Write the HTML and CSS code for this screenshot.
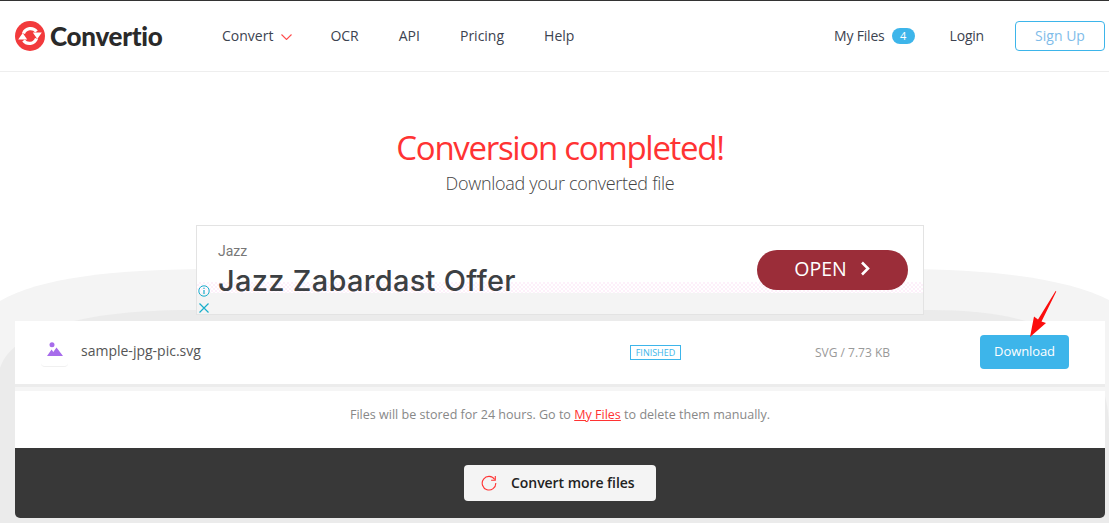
FILE: index.html
```html
<!DOCTYPE html>
<html lang="en">
<head>
<meta charset="utf-8">
<title>Convertio</title>
<link rel="stylesheet" href="styles.css">
</head>
<body>
<svg class="backdrop" width="1109" height="523" viewBox="0 0 1109 523" aria-hidden="true">
  <path class="backdrop-outer" d="M0 301C40 278 110 269 220 269H900C1000 269 1070 280 1109 300V523H0Z"/>
  <path class="backdrop-inner" d="M0 368C10 335 70 310 190 310H930C1020 310 1070 330 1092 365C1102 385 1109 400 1109 430V523H0Z"/>
</svg>
<header class="site-header">
  <a class="logo">
    <svg class="logo-mark" width="30" height="30" viewBox="0 0 30 30" aria-hidden="true">
      <circle cx="15" cy="15" r="15" fill="#f23a3c"/>
      <path d="M8.500 12.500A7.500 7.500 0 0 1 21.500 10.500" fill="none" stroke="#fff" stroke-width="3.200"/>
      <path d="M21.500 17.500A7.500 7.500 0 0 1 8.500 19.500" fill="none" stroke="#fff" stroke-width="3.200"/>
      <path fill="#fff" d="M17.800 11.500h9l-4.500 6.500ZM3.200 18.500h9L7.700 12Z"/>
    </svg>
    <span class="logo-text">Convertio</span>
  </a>
  <nav class="main-nav">
    <a class="nav-link nav-convert">Convert
      <svg class="caret" width="11" height="6" viewBox="0 0 11 6" aria-hidden="true"><path d="M.5.5l5 5 5-5" fill="none" stroke="#ff4b4b" stroke-width="1.100"/></svg>
    </a>
    <a class="nav-link nav-ocr">OCR</a>
    <a class="nav-link nav-api">API</a>
    <a class="nav-link nav-pricing">Pricing</a>
    <a class="nav-link">Help</a>
  </nav>
  <div class="account">
    <a class="nav-link my-files">My Files</a>
    <span class="count">4</span>
    <a class="nav-link login">Login</a>
    <a class="signup">Sign Up</a>
  </div>
</header>
<main class="content">
  <h1 class="title">Conversion completed!</h1>
  <p class="subtitle">Download your converted file</p>
  <section class="ad">
    <div class="ad-dither"></div>
    <div class="ad-main">
      <div class="ad-copy">
        <div class="ad-brand">Jazz</div>
        <div class="ad-headline">Jazz Zabardast Offer</div>
      </div>
      <a class="ad-open">OPEN
        <svg width="11" height="15" viewBox="0 0 11 15" aria-hidden="true"><path d="M2 1.500 8 7.500 2 13.500" fill="none" stroke="#fff" stroke-width="2.600"/></svg>
      </a>
    </div>
    <div class="ad-foot"></div>
    <div class="ad-controls">
      <svg width="12" height="12" viewBox="0 0 12 12" aria-hidden="true"><circle cx="6" cy="6" r="5.200" fill="none" stroke="#19aecb"/><path d="M6 5v4M6 2.800v1.200" stroke="#19aecb" stroke-width="1.200"/></svg>
      <svg width="12" height="12" viewBox="0 0 12 12" aria-hidden="true"><path d="M1.500 1.500l9 9M10.500 1.500l-9 9" stroke="#19aecb" stroke-width="1.200"/></svg>
    </div>
  </section>
  <section class="file-row">
    <div class="file-icon">
      <svg width="16" height="14" viewBox="0 0 16 14" aria-hidden="true"><circle cx="5" cy="2.700" r="2.500" fill="#a76ceb"/><path fill="#a76ceb" d="M0 14 4.600 7.500l1.700 2.400L9.500 5.500 16 14Z"/></svg>
    </div>
    <div class="file-name">sample-jpg-pic.svg</div>
    <div class="file-status"><span class="finished">Finished</span></div>
    <div class="file-size">SVG / 7.73 KB</div>
    <a class="download">Download</a>
  </section>
  <p class="notice">Files will be stored for 24 hours. Go to <a class="notice-link">My Files</a> to delete them manually.</p>
  <footer class="more">
    <a class="more-button">
      <svg width="16" height="16" viewBox="0 0 16 16" aria-hidden="true"><path d="M13.700 4.500A6.800 6.800 0 1 0 14.800 8" fill="none" stroke="#f33" stroke-width="1.100"/><path d="M14.300 1v4.200h-4.200" fill="none" stroke="#f33" stroke-width="1.100"/></svg>
      <span class="more-label">Convert more files</span>
    </a>
  </footer>
</main>
<svg class="pointer" width="30" height="48" viewBox="0 0 30 48" aria-hidden="true"><path fill="#fb0d0d" d="M26.300.5 11.500 30.500 16 32 0 46 4 25.500 8 28.500 25.600 0Z"/></svg>
</body>
</html>
```

FILE: styles.css
```css
* { box-sizing: border-box; }
html, body { margin: 0; padding: 0; }
body {
  position: relative;
  width: 1109px;
  height: 523px;
  overflow: hidden;
  background: #fff;
  font-family: "Open Sans", "Liberation Sans", sans-serif;
  color: #444;
}
a { color: inherit; text-decoration: none; }

.backdrop { position: absolute; left: 0; top: 0; }
.backdrop-outer { fill: #f4f4f4; }
.backdrop-inner { fill: #ebebeb; }

.site-header {
  position: relative;
  display: flex;
  align-items: center;
  height: 72px;
  padding: 0 4px 0 15px;
  background: #fff;
  border-top: 1px solid #333;
  border-bottom: 1px solid #eee;
}
.logo { display: flex; align-items: center; width: 207px; }
.logo-mark { flex: none; }
.logo-text {
  margin-left: 5px;
  font: 900 26px/30px Lato, "Open Sans", sans-serif;
  color: #2a2a2a;
  letter-spacing: -0.3px;
}
.main-nav { display: flex; align-items: center; }
.nav-link { font-size: 14px; line-height: 20px; color: #3c4350; }
.nav-convert { display: flex; align-items: center; gap: 8px; margin-right: 38px; }
.caret { margin-top: 2px; }
.nav-ocr { margin-right: 40px; }
.nav-api { margin-right: 40px; }
.nav-pricing { margin-right: 40px; }
.account { display: flex; align-items: center; margin-left: auto; }
.my-files { letter-spacing: -0.2px; }
.count {
  display: block;
  width: 23px;
  height: 16px;
  margin-left: 7px;
  border-radius: 8px;
  background: #3db5ea;
  color: #fff;
  font-size: 11px;
  line-height: 16px;
  text-align: center;
}
.login { margin-left: 35px; letter-spacing: -0.2px; }
.signup {
  display: block;
  width: 90px;
  height: 30px;
  margin-left: 31px;
  border: 1px solid #3db5ea;
  border-radius: 4px;
  color: #7fbce9;
  font-size: 14px;
  line-height: 28px;
  text-align: center;
}

.content {
  position: relative;
  width: 1090px;
  margin-left: 15px;
}
.title {
  margin: 56px 0 0;
  font-size: 33px;
  font-weight: 400;
  line-height: 40px;
  letter-spacing: -1.3px;
  color: #f33;
  text-align: center;
}
.subtitle {
  margin: 1px 0 0;
  font-size: 18px;
  font-weight: 300;
  line-height: 28px;
  letter-spacing: -0.3px;
  color: #444;
  text-align: center;
}

.ad {
  position: relative;
  width: 728px;
  height: 90px;
  margin: 28px auto 6px;
  display: flex;
  flex-direction: column;
  background: #fff;
  border: 1px solid #e3e3e3;
}
.ad-main {
  position: relative;
  display: flex;
  align-items: flex-start;
  justify-content: space-between;
  height: 67px;
  padding: 0 15px 0 21px;
}
.ad-copy { padding-top: 17px; }
.ad-brand {
  font: 400 14px/17px Roboto, sans-serif;
  color: #777;
}
.ad-headline {
  margin-top: 4px;
  font: 500 29px/34px Inter, Roboto, sans-serif;
  color: #3c4043;
  letter-spacing: 0.3px;
}
.ad-open {
  position: relative;
  display: flex;
  align-items: center;
  justify-content: center;
  gap: 13px;
  width: 151px;
  height: 40px;
  margin-top: 24px;
  padding-bottom: 3px;
  border-radius: 20px;
  background: #9b2d39;
  color: #fff;
  font-size: 19.500px;
  font-weight: 500;
}
.ad-dither {
  position: absolute;
  left: 0;
  right: 0;
  top: 56px;
  height: 11px;
  background-image: repeating-conic-gradient(#fdf0fa 0 25%, #fff 0 50%);
  background-size: 4px 4px;
}
.ad-foot { flex: 1; background: #f4f4f4; }
.ad-controls {
  position: absolute;
  left: 1px;
  bottom: 0;
  display: flex;
  flex-direction: column;
  gap: 5px;
}
.ad-controls svg { display: block; }

.file-row {
  display: flex;
  align-items: center;
  height: 70px;
  padding: 0 36px 7px 26px;
  background: #fff;
  border-bottom: 4px solid #f5f5f5;
  box-shadow: inset 0 -3px 0 #ececec;
}
.file-icon {
  display: flex;
  align-items: center;
  justify-content: center;
  width: 27px;
  height: 32px;
  padding-bottom: 2px;
  border-bottom: 1px solid #f0f0f0;
  border-radius: 0 0 4px 4px;
}
.file-name {
  width: 549px;
  margin-left: 13px;
  font-size: 14px;
  line-height: 20px;
  color: #555;
}
.file-status { width: 185px; margin-top: 4px; }
.finished {
  display: block;
  width: 51px;
  height: 15px;
  border: 1px solid #3db5ea;
  font-size: 9px;
  line-height: 13px;
  text-align: center;
  text-transform: uppercase;
  color: #3db5ea;
}
.file-size { width: 165px; margin-top: 4px; font-size: 12px; color: #999; }
.download {
  display: block;
  width: 89px;
  height: 34px;
  margin-top: 2px;
  border-radius: 4px;
  background: #3db5ea;
  color: #fff;
  font-size: 13px;
  letter-spacing: -0.1px;
  line-height: 33px;
  text-align: center;
}

.notice {
  height: 57px;
  margin: 0;
  padding-top: 15px;
  background: #fff;
  font-size: 12.550px;
  line-height: 18px;
  color: #888;
  text-align: center;
}
.notice-link { color: #f33; text-decoration: underline; }

.more {
  display: flex;
  align-items: center;
  justify-content: center;
  height: 70px;
  border-radius: 0 0 5px 5px;
  background: #383838;
}
.more-button {
  display: flex;
  align-items: center;
  gap: 14px;
  width: 192px;
  height: 36px;
  padding-left: 17px;
  border-radius: 4px;
  background: #f4f4f4;
  color: #222;
  font-size: 14px;
  font-weight: 600;
}
.more-button svg { flex: none; }
.more-label { margin-bottom: 2px; letter-spacing: -0.05px; }

.pointer { position: absolute; left: 1030px; top: 291px; }
```
